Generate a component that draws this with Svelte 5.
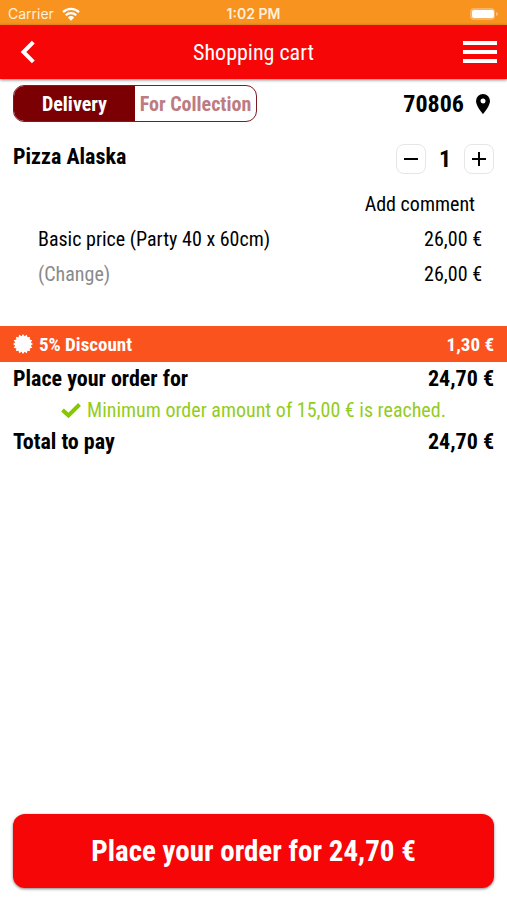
<script>
  let mode = $state("delivery");
  let quantity = $state(1);
  const unitPrice = 26;
  const minimum = 15;

  let subtotal = $derived(unitPrice * quantity);
  let discount = $derived(subtotal * 0.05);
  let total = $derived(subtotal - discount);

  function euro(value) {
    return value.toFixed(2).replace(".", ",") + " €";
  }
  function decrease() {
    if (quantity > 1) {
      quantity = quantity - 1;
    }
  }
  function increase() {
    quantity = quantity + 1;
  }

  // 16 pointed seal, alternating outer and inner radius
  let seal = "";
  for (let i = 0; i < 32; i++) {
    const r = i % 2 == 0 ? 10 : 8;
    const a = (i * Math.PI) / 16;
    seal += (r * Math.cos(a)).toFixed(2) + "," + (r * Math.sin(a)).toFixed(2) + " ";
  }
</script>

<div class="app">
  <div class="status">
    <span class="carrier">
      Carrier
      <svg class="wifi" viewBox="0 0 18 14" aria-hidden="true">
        <path d="M1 5.2a11.5 11.5 0 0 1 16 0M3.8 8.2a7.4 7.4 0 0 1 10.4 0" fill="none" stroke="currentColor" stroke-width="2.3" />
        <path d="M5.8 10.4a4.6 4.6 0 0 1 6.4 0L9 13.8z" fill="currentColor" />
      </svg>
    </span>
    <span class="time">1:02 PM</span>
    <svg class="battery" viewBox="0 0 30 14" aria-hidden="true">
      <rect x="1" y="1" width="25" height="12" rx="4" fill="#fff" fill-opacity=".3" />
      <rect x="3" y="3" width="22" height="8" rx="2" fill="#fff" />
      <path d="M27 5v4q2-.6 2-2t-2-2z" fill="#fff" fill-opacity=".4" />
    </svg>
  </div>

  <header>
    <button class="back-btn" aria-label="Back">
      <svg class="back" viewBox="0 0 16 24"><path d="M13.3 2.2 3.5 12l9.8 9.8" fill="none" stroke="#fff" stroke-width="4" /></svg>
    </button>
    <h1>Shopping cart</h1>
    <button class="menu-btn" aria-label="Menu">
      <svg class="menu" viewBox="0 0 34 24"><path d="M0 3h34M0 12h34M0 21h34" stroke="#fff" stroke-width="4" /></svg>
    </button>
  </header>

  <main>
    <div class="row options">
      <div class="toggle">
        <button class:active={mode == "delivery"} onclick={() => (mode = "delivery")}>Delivery</button>
        <button class:active={mode == "collection"} onclick={() => (mode = "collection")}>For Collection</button>
      </div>
      <button class="zip">
        70806
        <svg class="pin" viewBox="0 0 14 20" aria-hidden="true"><path fill="currentColor" fill-rule="evenodd" d="M7 0a7 7 0 0 0-7 7c0 5.2 7 13 7 13s7-7.8 7-13a7 7 0 0 0-7-7zm0 4.5a2.5 2.5 0 1 1 0 5 2.5 2.5 0 0 1 0-5z" /></svg>
      </button>
    </div>

    <div class="row item">
      <h2>Pizza Alaska</h2>
      <div class="stepper">
        <button aria-label="Less" onclick={decrease}>
          <svg viewBox="0 0 14 14"><path d="M0 7h14" stroke="#000" stroke-width="2" /></svg>
        </button>
        <span>{quantity}</span>
        <button aria-label="More" onclick={increase}>
          <svg viewBox="0 0 14 14"><path d="M0 7h14M7 0v14" stroke="#000" stroke-width="2" /></svg>
        </button>
      </div>
    </div>
    <div class="row comment"><button>Add comment</button></div>
    <div class="row detail">
      <span>Basic price (Party 40 x 60cm)</span>
      <span>{euro(unitPrice)}</span>
    </div>
    <div class="row detail">
      <button class="change">(Change)</button>
      <span>{euro(subtotal)}</span>
    </div>

    <div class="row discount">
      <span class="label">
        <svg class="badge" viewBox="-10 -10 20 20" aria-hidden="true"><polygon points={seal} fill="#fff" /></svg>
        5% Discount
      </span>
      <span>{euro(discount)}</span>
    </div>
    <div class="row sum"><span>Place your order for</span><span>{euro(total)}</span></div>
    {#if total >= minimum}
      <p class="reached">
        <svg class="check" viewBox="0 0 20 16" aria-hidden="true"><path d="M1.5 8l6 5.500L18.500 2.500" fill="none" stroke="currentColor" stroke-width="4" /></svg>
        Minimum order amount of {euro(minimum)} is reached.
      </p>
    {/if}
    <div class="row sum"><span>Total to pay</span><span>{euro(total)}</span></div>
  </main>

  <footer>
    <button class="order">Place your order for {euro(total)}</button>
  </footer>
</div>

<style>
  :global(body) {
    background: #fff;
  }
  .app {
    display: flex;
    flex-direction: column;
    min-height: 100vh;
    box-sizing: border-box;
    color: #000;
    font-family: "Roboto Condensed", "Liberation Sans Narrow", Roboto, sans-serif;
    font-size: 20px;
  }
  button {
    padding: 0;
    border: 0;
    background: none;
    color: inherit;
    font: inherit;
    cursor: pointer;
  }
  svg {
    display: block;
    flex: none;
  }
  h1, h2, p {
    margin: 0;
  }
  .status {
    display: grid;
    grid-template-columns: 1fr auto 1fr;
    align-items: center;
    height: 25px;
    padding: 2px 8px 0;
    box-sizing: border-box;
    background: #f7931e;
    color: #fff0dc;
    font-family: Inter, sans-serif;
    font-size: 14px;
  }
  .carrier {
    display: flex;
    align-items: center;
    gap: 8px;
  }
  .wifi {
    width: 18px;
    height: 14px;
    color: #fff;
  }
  .time {
    font-weight: 600;
  }
  .battery {
    width: 30px;
    height: 14px;
    justify-self: end;
  }
  header {
    display: grid;
    grid-template-columns: 1fr auto 1fr;
    align-items: center;
    height: 54px;
    padding: 0 10px;
    background: #f60606;
    color: #fff;
    box-shadow: 0 1px 3px rgba(0, 0, 0, 0.5);
  }
  h1 {
    font-size: 22px;
    font-weight: 400;
  }
  .back-btn {
    justify-self: start;
    padding: 0 10px;
  }
  .menu-btn {
    justify-self: end;
  }
  .back {
    width: 16px;
    height: 24px;
  }
  .menu {
    width: 34px;
    height: 24px;
  }
  main {
    flex: 1;
  }
  .row {
    display: flex;
    align-items: center;
    justify-content: space-between;
    padding: 0 13px;
  }
  .options {
    padding-top: 6px;
  }
  .toggle {
    display: flex;
    height: 37px;
    box-sizing: border-box;
    border: 1px solid #7d1a22;
    border-radius: 11px;
    overflow: hidden;
  }
  .toggle button {
    width: 121px;
    color: #bd7c82;
    font-weight: 700;
    white-space: nowrap;
  }
  .toggle .active {
    background: #7b0004;
    color: #fff;
  }
  .zip {
    display: flex;
    align-items: center;
    gap: 12px;
    padding-right: 4px;
    font-size: 24px;
    font-weight: 700;
  }
  .pin {
    width: 14px;
    height: 20px;
  }
  .item {
    align-items: flex-start;
    padding-top: 22px;
  }
  h2 {
    font-size: 22px;
  }
  .stepper {
    display: flex;
    align-items: center;
    font-size: 24px;
    font-weight: 700;
  }
  .stepper span {
    min-width: 38px;
    text-align: center;
  }
  .stepper button {
    display: grid;
    place-items: center;
    width: 30px;
    height: 30px;
    border: 1px solid #e6e6e6;
    border-radius: 8px;
    box-sizing: border-box;
  }
  .stepper svg {
    width: 14px;
    height: 14px;
  }
  .comment {
    justify-content: flex-end;
    height: 35px;
    padding: 12px 32px 0 0;
  }
  .detail {
    height: 35px;
    padding: 0 25px 0 38px;
  }
  .change {
    color: #8a8a8a;
  }
  .discount {
    height: 36px;
    margin-top: 35px;
    background: #fb531e;
    color: #fff;
    font-size: 19px;
    font-weight: 700;
  }
  .label {
    display: flex;
    align-items: center;
    gap: 6px;
  }
  .badge {
    width: 20px;
    height: 20px;
  }
  .sum {
    height: 32px;
    font-size: 22px;
    font-weight: 700;
  }
  .reached {
    display: flex;
    align-items: center;
    justify-content: center;
    gap: 6px;
    height: 31px;
    color: #93cd1c;
  }
  .check {
    width: 20px;
    height: 16px;
    color: #86c800;
  }
  footer {
    padding: 0 13px 12px;
  }
  .order {
    width: 100%;
    height: 74px;
    border-radius: 12px;
    background: #f60606;
    box-shadow: 0 1px 3px rgba(0, 0, 0, 0.5);
    color: #fff;
    font-size: 29px;
    font-weight: 700;
  }
</style>
